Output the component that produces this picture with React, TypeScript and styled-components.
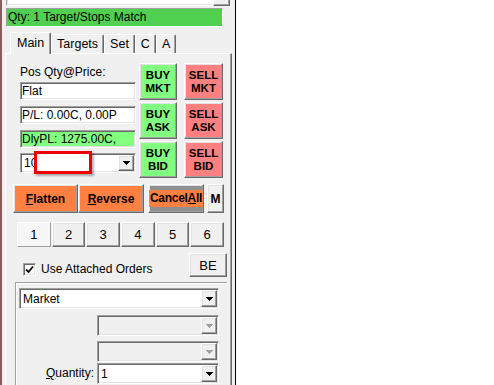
import React from 'react';
import styled, {createGlobalStyle, css} from 'styled-components';

const GlobalStyle = createGlobalStyle`
  html, body {
    margin: 0;
    padding: 0;
    background: #ffffff;
  }
  body {
    font-family: "Liberation Sans", Arial, sans-serif;
    font-size: 12px;
    color: #000000;
  }
  * {
    box-sizing: border-box;
  }
`;

// classic windows 3d edges
const raised = css`
  border: 1px solid;
  border-color: #ffffff #696969 #696969 #ffffff;
  box-shadow: inset -1px -1px #a0a0a0, inset 1px 1px #e3e3e3;
`;

const sunken = css`
  border: 1px solid;
  border-color: #a0a0a0 #ffffff #ffffff #a0a0a0;
  box-shadow: inset 1px 1px #696969, inset -1px -1px #e3e3e3;
`;

const Page = styled.div`
  display: flex;
  height: 385px;
  overflow: hidden;
`;

const Panel = styled.div`
  width: 236px;
  height: 385px;
  background: #f0f0f0;
  border-left: 2px solid #8e5b5b;
  border-right: 1px solid #000000;
  display: flex;
  flex-direction: column;
`;

const TopStrip = styled.div`
  display: flex;
  height: 6px;
  margin-left: 4px;
  width: 224px;
`;

const TopField = styled.div`
  flex: 1;
  background: #ffffff;
  border-left: 1px solid #a0a0a0;
  border-bottom: 1px solid #ffffff;
  box-shadow: inset 1px -1px #e3e3e3;
`;

const TopButton = styled.div`
  width: 17px;
  background: #f0f0f0;
  border-left: 1px solid #ffffff;
  border-right: 1px solid #696969;
  border-bottom: 1px solid #696969;
  box-shadow: inset -1px -1px #a0a0a0;
`;

const StatusBar = styled.div`
  margin: 2px 0 0 4px;
  width: 217px;
  height: 19px;
  background: #50d050;
  border: 1px solid;
  border-color: #a0a0a0 #ffffff #ffffff #a0a0a0;
  padding-left: 1px;
  line-height: 17px;
  white-space: nowrap;
`;

const TabStrip = styled.div`
  display: flex;
  align-items: flex-end;
  height: 21px;
  margin-top: 5px;
  padding-left: 8px;
  position: relative;
  z-index: 1;
`;

const Tab = styled.div<{$active?: boolean}>`
  height: ${(p) => (p.$active ? '22px' : '19px')};
  margin-bottom: ${(p) => (p.$active ? '-1px' : '0')};
  padding: 0 ${(p) => (p.$active ? '6px' : '5px')};
  padding-top: ${(p) => (p.$active ? '2px' : '1px')};
  line-height: 16px;
  font-size: 12.5px;
  background: #f0f0f0;
  border-top: 1px solid #ffffff;
  border-left: 1px solid #ffffff;
  border-right: 1px solid #696969;
  box-shadow: inset -1px 0 #a0a0a0;
  border-radius: 2px 2px 0 0;
  white-space: nowrap;
`;

const TabPanel = styled.div`
  flex: 1;
  margin-left: 3px;
  width: 227px;
  border-top: 1px solid #ffffff;
  border-left: 1px solid #ffffff;
  border-right: 1px solid #696969;
  box-shadow: inset -1px 0 #a0a0a0;
  display: flex;
  flex-direction: column;
`;

const TradeSection = styled.div`
  display: flex;
  gap: 3px;
  margin-top: 9px;
  padding-left: 14px;
`;

const LeftCol = styled.div`
  width: 116px;
  display: flex;
  flex-direction: column;
`;

const FieldLabel = styled.div`
  height: 19px;
  padding-top: 2px;
  line-height: 14px;
`;

const TextBox = styled.div<{$bg?: string; $gap?: number}>`
  ${sunken};
  height: 18px;
  margin-top: ${(p) => p.$gap || 0}px;
  padding: 1px 1px 0 1px;
  background: ${(p) => p.$bg || '#ffffff'};
  line-height: 15px;
  white-space: nowrap;
  overflow: hidden;
`;

const ButtonGrid = styled.div`
  display: grid;
  grid-template-columns: 38px 39px;
  grid-auto-rows: 37px;
  column-gap: 7px;
  row-gap: 2px;
`;

const TradeButton = styled.div<{$bg: string}>`
  ${raised};
  background: ${(p) => p.$bg};
  display: flex;
  flex-direction: column;
  align-items: center;
  justify-content: center;
  font-weight: bold;
  font-size: 11.5px;
  line-height: 13px;
`;

const Combo = styled.div<{$h?: number; $gap?: number; $disabled?: boolean; $span?: boolean}>`
  ${sunken};
  position: relative;
  display: flex;
  padding: 1px;
  height: ${(p) => p.$h || 21}px;
  margin-top: ${(p) => p.$gap || 0}px;
  background: ${(p) => (p.$disabled ? '#f0f0f0' : '#ffffff')};
  grid-column: ${(p) => (p.$span ? '1 / -1' : 'auto')};
`;

const ComboText = styled.div`
  flex: 1;
  padding-left: 2px;
  display: flex;
  align-items: center;
  white-space: nowrap;
  overflow: hidden;
`;

const DropButton = styled.div`
  ${raised};
  width: 16px;
  background: #f0f0f0;
  display: flex;
  align-items: center;
  justify-content: center;
`;

const Redact = styled.div`
  position: absolute;
  left: 13px;
  top: -3px;
  width: 58px;
  height: 23px;
  background: #ffffff;
  border: 3px solid #ee0000;
  box-shadow: 2px 2px 2px rgba(0, 0, 0, 0.3);
`;

const ActionRow = styled.div`
  display: flex;
  margin-top: 6px;
  padding-left: 7px;
  height: 29px;
`;

const ActionButton = styled.div<{$w: number; $bg: string; $ml?: number}>`
  ${raised};
  width: ${(p) => p.$w}px;
  margin-left: ${(p) => p.$ml || 0}px;
  background: ${(p) => p.$bg};
  display: flex;
  align-items: center;
  justify-content: center;
  font-weight: bold;
  font-size: 12px;
  white-space: nowrap;
`;

const Highlight = styled.span`
  background: #ff8040;
  padding: 1px 1px 2px;
  letter-spacing: -0.3px;
`;

const NumberRow = styled.div`
  display: grid;
  grid-template-columns: repeat(6, 1fr);
  gap: 1px;
  margin-top: 9px;
  margin-left: 11px;
  width: 207px;
  height: 25px;
`;

const NumberButton = styled.div<{$active?: boolean}>`
  ${raised};
  display: flex;
  align-items: center;
  justify-content: center;
  font-size: 13px;
  background: ${(p) => (p.$active ? '#f7f7f7' : '#f0f0f0')};
  ${(p) =>
    p.$active &&
    css`
      border-color: #ffffff #a0a0a0 #a0a0a0 #ffffff;
      box-shadow: none;
    `}
`;

const CheckRow = styled.div`
  display: flex;
  justify-content: space-between;
  margin-top: 6px;
  padding: 0 4px 0 17px;
  height: 24px;
`;

const CheckLabel = styled.label`
  display: flex;
  align-items: center;
  gap: 5px;
  align-self: flex-end;
  margin-bottom: 1px;
  line-height: 14px;
`;

const CheckBox = styled.span`
  ${sunken};
  width: 13px;
  height: 13px;
  background: #ffffff;
  display: flex;
  align-items: center;
  justify-content: center;
`;

const SmallButton = styled.div`
  ${raised};
  width: 38px;
  display: flex;
  align-items: center;
  justify-content: center;
  font-size: 13px;
`;

const GroupBox = styled.div`
  flex: 1;
  margin: 5px 4px 0 9px;
  border-top: 1px solid #a0a0a0;
  border-left: 1px solid #a0a0a0;
  box-shadow: inset 1px 1px #ffffff;
  padding: 5px 0 0 3px;
`;

const GroupGrid = styled.div`
  display: grid;
  grid-template-columns: 78px 122px;
`;

const RowLabel = styled.div<{$gap?: number}>`
  margin-top: ${(p) => p.$gap || 0}px;
  text-align: right;
  padding-right: 3px;
  line-height: 21px;
`;

const Key = styled.span`
  text-decoration: underline;
`;

const Arrow = ({color = '#000'}: {color?: string}) => (
  <svg width="7" height="4" viewBox="0 0 7 4" shapeRendering="crispEdges">
    <path d="M0 0h7v1h-1v1h-1v1h-1v1h-1v-1h-1v-1h-1v-1h-1z" fill={color} />
  </svg>
);

const Check = () => (
  <svg width="9" height="9" viewBox="0 0 9 9">
    <path d="M1 4.5 L3.5 7 L8 1.5" stroke="#000" strokeWidth="1.8" fill="none" />
  </svg>
);

const tabs = ['Main', 'Targets', 'Set', 'C', 'A'];

export default function App() {
  return (
    <Page>
      <GlobalStyle />
      <Panel>
        <TopStrip>
          <TopField />
          <TopButton />
        </TopStrip>
        <StatusBar>Qty: 1 Target/Stops Match</StatusBar>
        <TabStrip>
          {tabs.map((t, i) => (
            <Tab key={t} $active={i === 0}>
              {t}
            </Tab>
          ))}
        </TabStrip>
        <TabPanel>
          <TradeSection>
            <LeftCol>
              <FieldLabel>Pos Qty@Price:</FieldLabel>
              <TextBox>Flat</TextBox>
              <TextBox $gap={6}>P/L: 0.00C, 0.00P</TextBox>
              <TextBox $gap={6} $bg="#80ff80">
                DlyPL: 1275.00C,
              </TextBox>
              <Combo $gap={5} $h={20}>
                <ComboText>10</ComboText>
                <DropButton>
                  <Arrow />
                </DropButton>
                <Redact />
              </Combo>
            </LeftCol>
            <ButtonGrid>
              <TradeButton $bg="#80ff80">
                <span>BUY</span>
                <span>MKT</span>
              </TradeButton>
              <TradeButton $bg="#ff8080">
                <span>SELL</span>
                <span>MKT</span>
              </TradeButton>
              <TradeButton $bg="#80ff80">
                <span>BUY</span>
                <span>ASK</span>
              </TradeButton>
              <TradeButton $bg="#ff8080">
                <span>SELL</span>
                <span>ASK</span>
              </TradeButton>
              <TradeButton $bg="#80ff80">
                <span>BUY</span>
                <span>BID</span>
              </TradeButton>
              <TradeButton $bg="#ff8080">
                <span>SELL</span>
                <span>BID</span>
              </TradeButton>
            </ButtonGrid>
          </TradeSection>

          <ActionRow>
            <ActionButton $w={65} $bg="#ff8040">
              <span>
                <Key>F</Key>latten
              </span>
            </ActionButton>
            <ActionButton $w={66} $bg="#ff8040">
              <span>
                <Key>R</Key>everse
              </span>
            </ActionButton>
            <ActionButton $w={56} $ml={4} $bg="#8f8f8f">
              <Highlight>
                Cancel<Key>A</Key>ll
              </Highlight>
            </ActionButton>
            <ActionButton $w={17} $ml={3} $bg="#f0f0f0">
              M
            </ActionButton>
          </ActionRow>

          <NumberRow>
            {[1, 2, 3, 4, 5, 6].map((n) => (
              <NumberButton key={n} $active={n === 1}>
                {n}
              </NumberButton>
            ))}
          </NumberRow>

          <CheckRow>
            <CheckLabel>
              <CheckBox>
                <Check />
              </CheckBox>
              Use Attached Orders
            </CheckLabel>
            <SmallButton>BE</SmallButton>
          </CheckRow>

          <GroupBox>
            <GroupGrid>
              <Combo $span>
                <ComboText>Market</ComboText>
                <DropButton>
                  <Arrow />
                </DropButton>
              </Combo>
              <RowLabel $gap={6} />
              <Combo $gap={6} $disabled>
                <ComboText />
                <DropButton>
                  <Arrow color="#a0a0a0" />
                </DropButton>
              </Combo>
              <RowLabel $gap={5} />
              <Combo $gap={5} $disabled>
                <ComboText />
                <DropButton>
                  <Arrow color="#a0a0a0" />
                </DropButton>
              </Combo>
              <RowLabel $gap={1}>
                <Key>Q</Key>uantity:
              </RowLabel>
              <Combo $gap={1}>
                <ComboText>1</ComboText>
                <DropButton>
                  <Arrow />
                </DropButton>
              </Combo>
            </GroupGrid>
          </GroupBox>
        </TabPanel>
      </Panel>
    </Page>
  );
}
